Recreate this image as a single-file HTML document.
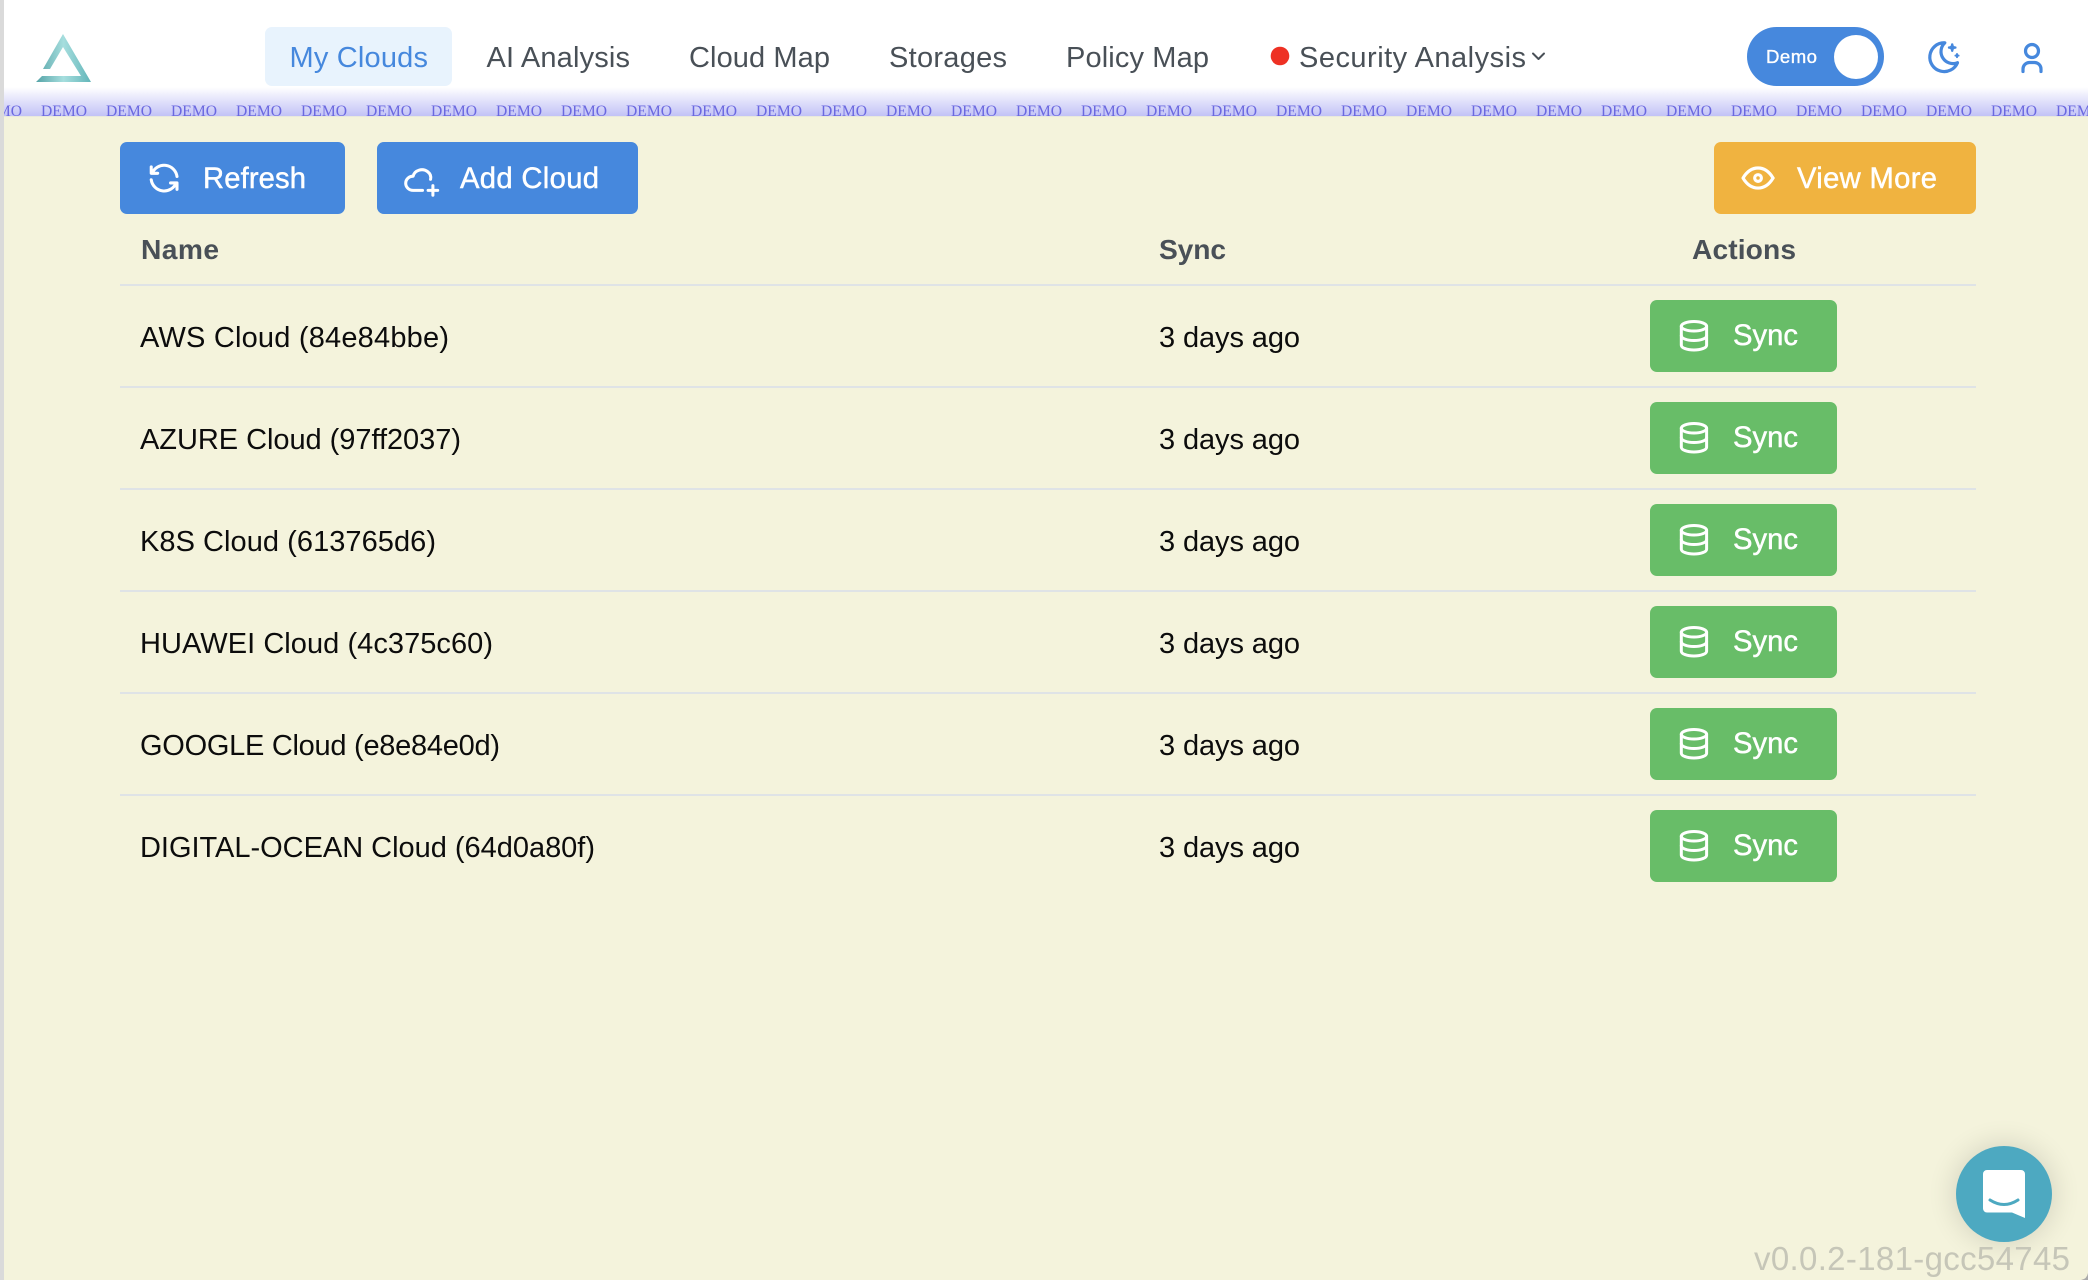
<!DOCTYPE html>
<html lang="en">
<head>
<meta charset="utf-8">
<title>My Clouds</title>
<style>
html,body{margin:0;padding:0;width:2088px;height:1280px;overflow:hidden;background:#f4f3dc}
svg{display:block}
text{font-family:"Liberation Sans",sans-serif}
.nav{font-size:29px;fill:#495057}
.btn{font-size:29.200px;fill:#fff;stroke:#fff;stroke-width:.45px}
.th{font-size:28.200px;font-weight:700;fill:#495057}
.td{font-size:29px;fill:#0c0c0c}
.dm{font-family:"Liberation Serif",serif;font-size:15.6px;fill:#6a68e0}
.ic{fill:none;stroke:#fff;stroke-width:1.9;stroke-linecap:round;stroke-linejoin:round}
.ib{fill:none;stroke:#4688dd;stroke-width:2;stroke-linecap:round;stroke-linejoin:round}
</style>
</head>
<body>
<svg width="2088" height="1280" viewBox="0 0 2088 1280" xmlns="http://www.w3.org/2000/svg">
<defs>
<linearGradient id="band" x1="0" y1="0" x2="0" y2="1"><stop offset="0" stop-color="#fff"/><stop offset="1" stop-color="#c2c2f6"/></linearGradient>
<linearGradient id="logo" gradientUnits="userSpaceOnUse" x1="36" y1="0" x2="91" y2="0"><stop offset="0" stop-color="#55a3a7"/><stop offset=".5" stop-color="#a6dede"/><stop offset="1" stop-color="#62b5b9"/></linearGradient>
<clipPath id="bc"><rect x="3" y="87" width="2085" height="29"/></clipPath>
<filter id="sh" x="-50%" y="-50%" width="200%" height="200%"><feGaussianBlur stdDeviation="14"/></filter>
</defs>

<rect width="2088" height="1280" fill="#f4f3dc"/>
<rect width="2088" height="116" fill="#fff"/>
<rect y="87" width="2088" height="29" fill="url(#band)"/>
<rect y="116" width="2088" height="1" fill="#e9e9dc"/>
<g clip-path="url(#bc)">
<text class="dm" x="-24" y="116" textLength="46">DEMO</text>
<text class="dm" x="41" y="116" textLength="46">DEMO</text>
<text class="dm" x="106" y="116" textLength="46">DEMO</text>
<text class="dm" x="171" y="116" textLength="46">DEMO</text>
<text class="dm" x="236" y="116" textLength="46">DEMO</text>
<text class="dm" x="301" y="116" textLength="46">DEMO</text>
<text class="dm" x="366" y="116" textLength="46">DEMO</text>
<text class="dm" x="431" y="116" textLength="46">DEMO</text>
<text class="dm" x="496" y="116" textLength="46">DEMO</text>
<text class="dm" x="561" y="116" textLength="46">DEMO</text>
<text class="dm" x="626" y="116" textLength="46">DEMO</text>
<text class="dm" x="691" y="116" textLength="46">DEMO</text>
<text class="dm" x="756" y="116" textLength="46">DEMO</text>
<text class="dm" x="821" y="116" textLength="46">DEMO</text>
<text class="dm" x="886" y="116" textLength="46">DEMO</text>
<text class="dm" x="951" y="116" textLength="46">DEMO</text>
<text class="dm" x="1016" y="116" textLength="46">DEMO</text>
<text class="dm" x="1081" y="116" textLength="46">DEMO</text>
<text class="dm" x="1146" y="116" textLength="46">DEMO</text>
<text class="dm" x="1211" y="116" textLength="46">DEMO</text>
<text class="dm" x="1276" y="116" textLength="46">DEMO</text>
<text class="dm" x="1341" y="116" textLength="46">DEMO</text>
<text class="dm" x="1406" y="116" textLength="46">DEMO</text>
<text class="dm" x="1471" y="116" textLength="46">DEMO</text>
<text class="dm" x="1536" y="116" textLength="46">DEMO</text>
<text class="dm" x="1601" y="116" textLength="46">DEMO</text>
<text class="dm" x="1666" y="116" textLength="46">DEMO</text>
<text class="dm" x="1731" y="116" textLength="46">DEMO</text>
<text class="dm" x="1796" y="116" textLength="46">DEMO</text>
<text class="dm" x="1861" y="116" textLength="46">DEMO</text>
<text class="dm" x="1926" y="116" textLength="46">DEMO</text>
<text class="dm" x="1991" y="116" textLength="46">DEMO</text>
<text class="dm" x="2056" y="116" textLength="46">DEMO</text>
</g>
<rect width="4" height="1280" fill="#dadada"/>

<!-- logo -->
<polygon points="63,34 91,82 36,82 42,76 81,76 63,47 50,69 43,69" fill="url(#logo)"/>

<!-- nav -->
<rect x="265" y="27" width="187" height="59" rx="7" fill="#e8f3fd"/>
<text class="nav" x="289.500" y="67" textLength="138.500" style="fill:#4688dd">My Clouds</text>
<text class="nav" x="486.500" y="67" textLength="143.500">AI Analysis</text>
<text class="nav" x="689" y="67" textLength="141">Cloud Map</text>
<text class="nav" x="889" y="67" textLength="118">Storages</text>
<text class="nav" x="1066" y="67" textLength="143">Policy Map</text>
<circle cx="1280" cy="56" r="9.3" fill="#ee3124"/>
<text class="nav" x="1299" y="67" textLength="227">Security Analysis</text>
<path d="M1533 53.500l5.500 5.500 5.500-5.500" fill="none" stroke="#495057" stroke-width="2" stroke-linecap="round" stroke-linejoin="round"/>

<!-- toggle -->
<rect x="1747" y="27" width="137" height="59" rx="29.500" fill="#4688dd"/>
<circle cx="1856" cy="57" r="22" fill="#fff"/>
<text x="1766" y="63" font-size="18.600" fill="#fff" stroke="#fff" stroke-width=".35" textLength="51">Demo</text>

<!-- moon -->
<g transform="translate(1925 38) scale(1.6)">
<path class="ib" d="M12 3c.132 0 .263 0 .393 0a7.500 7.500 0 0 0 7.920 12.446a9 9 0 1 1 -8.313 -12.454z"/>
<path class="ib" style="fill:#4688dd;stroke-width:1.500" d="M17 4a2 2 0 0 0 2 2a2 2 0 0 0 -2 2a2 2 0 0 0 -2 -2a2 2 0 0 0 2 -2"/>
<path class="ib" style="fill:#4688dd;stroke-width:1.200" d="M20 10a1 1 0 0 0 1 1a1 1 0 0 0 -1 1a1 1 0 0 0 -1 -1a1 1 0 0 0 1 -1"/>
</g>
<!-- user -->
<circle cx="2032" cy="51" r="6.500" fill="none" stroke="#4688dd" stroke-width="3.200"/>
<path d="M2023 71.500v-2.500a6.500 6.500 0 0 1 6.500-6.500h5a6.500 6.500 0 0 1 6.500 6.500v2.500" fill="none" stroke="#4688dd" stroke-width="3.200" stroke-linecap="round"/>

<!-- top buttons -->
<rect x="120" y="142" width="225" height="72" rx="7" fill="#4688dd"/>
<g transform="translate(144.800 158.800) scale(1.610)">
<path class="ic" d="M20 11a8.100 8.100 0 0 0 -15.500 -2m-.5 -4v4h4"/>
<path class="ic" d="M4 13a8.100 8.100 0 0 0 15.500 2m.5 4v-4h-4"/>
</g>
<text class="btn" x="203" y="188" textLength="103">Refresh</text>

<rect x="377" y="142" width="261" height="72" rx="7" fill="#4688dd"/>
<g transform="translate(402.500 160) scale(1.600)">
<path class="ic" d="M12.500 19h-5.843c-2.573 -.004 -4.657 -1.987 -4.657 -4.440c0 -2.454 2.084 -4.438 4.657 -4.438c.393 -1.748 1.796 -3.175 3.678 -3.747c1.880 -.571 3.956 -.205 5.444 .967c1.488 1.170 2.162 2.967 1.770 4.715"/>
<path class="ic" d="M16 19h6M19 16v6"/>
</g>
<text class="btn" x="460" y="188" textLength="139">Add Cloud</text>

<rect x="1714" y="142" width="262" height="72" rx="7" fill="#f0b340"/>
<g transform="translate(1738 158) scale(1.670)">
<path class="ic" d="M10 12a2 2 0 1 0 4 0a2 2 0 0 0 -4 0"/>
<path class="ic" d="M21 12c-2.400 4 -5.400 6 -9 6c-3.600 0 -6.600 -2 -9 -6c2.400 -4 5.400 -6 9 -6c3.600 0 6.600 2 9 6"/>
</g>
<text class="btn" x="1797" y="188" textLength="140">View More</text>

<!-- table header -->
<text class="th" x="141" y="259" textLength="78">Name</text>
<text class="th" x="1159" y="259" textLength="67">Sync</text>
<text class="th" x="1692" y="259" textLength="104">Actions</text>
<rect x="120" y="284" width="1856" height="2" fill="#dfe3e6"/>

<!-- rows -->
<text class="td" x="140" y="347" textLength="309">AWS Cloud (84e84bbe)</text>
<text class="td" x="1159" y="347" textLength="141">3 days ago</text>
<rect x="120" y="386" width="1856" height="2" fill="#dfe3e6"/>
<rect x="1650" y="300" width="187" height="72" rx="7" fill="#68bd68"/>
<g transform="translate(1675 316.800) scale(1.580)">
<path class="ic" d="M12 6m-8 0a8 3 0 1 0 16 0a8 3 0 1 0 -16 0"/><path class="ic" d="M4 6v6a8 3 0 0 0 16 0v-6"/><path class="ic" d="M4 12v6a8 3 0 0 0 16 0v-6"/>
</g>
<text class="btn" x="1733" y="345" textLength="65">Sync</text>

<text class="td" x="140" y="449" textLength="321">AZURE Cloud (97ff2037)</text>
<text class="td" x="1159" y="449" textLength="141">3 days ago</text>
<rect x="120" y="488" width="1856" height="2" fill="#dfe3e6"/>
<rect x="1650" y="402" width="187" height="72" rx="7" fill="#68bd68"/>
<g transform="translate(1675 418.800) scale(1.580)">
<path class="ic" d="M12 6m-8 0a8 3 0 1 0 16 0a8 3 0 1 0 -16 0"/><path class="ic" d="M4 6v6a8 3 0 0 0 16 0v-6"/><path class="ic" d="M4 12v6a8 3 0 0 0 16 0v-6"/>
</g>
<text class="btn" x="1733" y="447" textLength="65">Sync</text>

<text class="td" x="140" y="551" textLength="296">K8S Cloud (613765d6)</text>
<text class="td" x="1159" y="551" textLength="141">3 days ago</text>
<rect x="120" y="590" width="1856" height="2" fill="#dfe3e6"/>
<rect x="1650" y="504" width="187" height="72" rx="7" fill="#68bd68"/>
<g transform="translate(1675 520.800) scale(1.580)">
<path class="ic" d="M12 6m-8 0a8 3 0 1 0 16 0a8 3 0 1 0 -16 0"/><path class="ic" d="M4 6v6a8 3 0 0 0 16 0v-6"/><path class="ic" d="M4 12v6a8 3 0 0 0 16 0v-6"/>
</g>
<text class="btn" x="1733" y="549" textLength="65">Sync</text>

<text class="td" x="140" y="653" textLength="353">HUAWEI Cloud (4c375c60)</text>
<text class="td" x="1159" y="653" textLength="141">3 days ago</text>
<rect x="120" y="692" width="1856" height="2" fill="#dfe3e6"/>
<rect x="1650" y="606" width="187" height="72" rx="7" fill="#68bd68"/>
<g transform="translate(1675 622.800) scale(1.580)">
<path class="ic" d="M12 6m-8 0a8 3 0 1 0 16 0a8 3 0 1 0 -16 0"/><path class="ic" d="M4 6v6a8 3 0 0 0 16 0v-6"/><path class="ic" d="M4 12v6a8 3 0 0 0 16 0v-6"/>
</g>
<text class="btn" x="1733" y="651" textLength="65">Sync</text>

<text class="td" x="140" y="755" textLength="360">GOOGLE Cloud (e8e84e0d)</text>
<text class="td" x="1159" y="755" textLength="141">3 days ago</text>
<rect x="120" y="794" width="1856" height="2" fill="#dfe3e6"/>
<rect x="1650" y="708" width="187" height="72" rx="7" fill="#68bd68"/>
<g transform="translate(1675 724.800) scale(1.580)">
<path class="ic" d="M12 6m-8 0a8 3 0 1 0 16 0a8 3 0 1 0 -16 0"/><path class="ic" d="M4 6v6a8 3 0 0 0 16 0v-6"/><path class="ic" d="M4 12v6a8 3 0 0 0 16 0v-6"/>
</g>
<text class="btn" x="1733" y="753" textLength="65">Sync</text>

<text class="td" x="140" y="857" textLength="455">DIGITAL-OCEAN Cloud (64d0a80f)</text>
<text class="td" x="1159" y="857" textLength="141">3 days ago</text>
<rect x="1650" y="810" width="187" height="72" rx="7" fill="#68bd68"/>
<g transform="translate(1675 826.800) scale(1.580)">
<path class="ic" d="M12 6m-8 0a8 3 0 1 0 16 0a8 3 0 1 0 -16 0"/><path class="ic" d="M4 6v6a8 3 0 0 0 16 0v-6"/><path class="ic" d="M4 12v6a8 3 0 0 0 16 0v-6"/>
</g>
<text class="btn" x="1733" y="855" textLength="65">Sync</text>

<!-- chat -->
<circle cx="2004" cy="1194" r="50" fill="#000" opacity=".13" filter="url(#sh)"/>
<circle cx="2004" cy="1194" r="48" fill="#4da9c1"/>
<path d="M1987 1170h34a4 4 0 0 1 4 4v44l-13-5.500h-25a4 4 0 0 1-4-4v-34.500a4 4 0 0 1 4-4z" fill="#fff"/>
<path d="M1990 1200q14 9 28 0" fill="none" stroke="#4da9c1" stroke-width="3" stroke-linecap="round"/>

<!-- version -->
<text x="1754" y="1270" font-size="33" fill="#c6c6b8" textLength="316">v0.0.2-181-gcc54745</text>
<path d="M2088 1273q-1 6-7 7h7z" fill="#aaa"/>
</svg>
</body>
</html>
